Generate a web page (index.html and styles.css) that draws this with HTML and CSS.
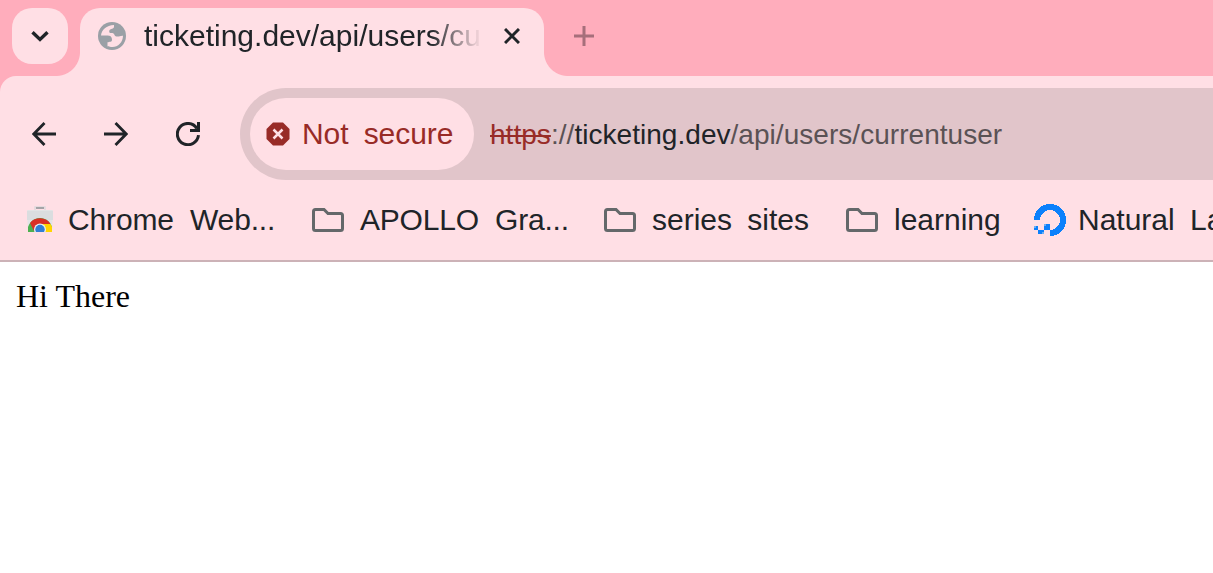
FILE: index.html
```html
<!DOCTYPE html>
<html lang="en">
<head>
<meta charset="utf-8">
<title>ticketing.dev/api/users/currentuser</title>
<link rel="stylesheet" href="styles.css">
</head>
<body>
<header class="tabstrip">
  <button class="tab-search" aria-label="Search tabs">
    <svg width="56" height="56" viewBox="0 0 56 56"><path d="M20.500 24.200l7.500 7.300 7.500-7.300" fill="none" stroke="#202428" stroke-width="3.400"/></svg>
  </button>
  <div class="tab">
    <svg class="globe" width="28" height="28" viewBox="0 0 28 28"><circle cx="14" cy="14" r="14" fill="#9aa0a6"/><path d="M3 13.500C3.500 8 8.500 3.300 16 3v1.800c0 1.200-.8 1.700-2 2-2 .5-2.800 1.200-2.800 2.700 0 1.200.8 1.500 2 1.500 2 0 2.800.6 3.300 2 .5 1.200 1.500 1.500 3 1.500 2 0 3-1 5.500-.8 0 6.500-5 11.300-10.500 11.300-2 0-3.500-.2-5-.8v-4c2 0 4.500 0 4.500-2.400 0-2.800-1.500-4.300-4.500-4.300z" fill="#ffdfe5"/></svg>
    <span class="tab-title">ticketing.dev/api/users/currentuser</span>
    <svg class="close" width="16" height="16" viewBox="0 0 16 16"><path d="M1 1l14 14M15 1L1 15" stroke="#202428" stroke-width="3"/></svg>
  </div>
  <button class="new-tab" aria-label="New tab">
    <svg width="20" height="20" viewBox="0 0 20 20"><path d="M10 0v20M0 10h20" stroke="#a66f7b" stroke-width="3"/></svg>
  </button>
</header>
<div class="toolbar-frame">
<nav class="toolbar">
  <svg class="nav-icon" width="24" height="24" viewBox="0 0 24 24"><path d="M24 12H2M12.500 1L1.800 12l10.700 11" fill="none" stroke="#202428" stroke-width="2.800"/></svg>
  <svg class="nav-icon" width="24" height="24" viewBox="0 0 24 24"><path d="M0 12h22M11.500 1l10.700 11-10.700 11" fill="none" stroke="#202428" stroke-width="2.800"/></svg>
  <svg class="nav-icon" width="24" height="24" viewBox="0 0 24 24"><path d="M22.500 13.200A10.600 10.600 0 1 1 20.800 6.200" fill="none" stroke="#202428" stroke-width="3"/><path d="M21 0h3v10H14V7h4l3-1z" fill="#202428"/></svg>
  <div class="omnibox">
    <div class="security">
      <svg width="24" height="24" viewBox="0 0 24 24"><path d="M7 .5h10L23.500 7v10L17 23.500H7L.5 17V7z" fill="#982b27"/><path d="M7.500 7.500l9 9M16.500 7.500l-9 9" stroke="#ffdfe5" stroke-width="2.500"/></svg>
      <span>Not secure</span>
    </div>
    <div class="url"><span class="scheme">https</span>://<span class="host">ticketing.dev</span>/api/users/currentuser</div>
  </div>
</nav>
</div>
<div class="bookmarks">
  <div class="bookmark">
    <svg width="32" height="32" viewBox="0 0 32 32">
      <defs><clipPath id="bag"><path d="M4 6h24v22H4z"/></clipPath></defs>
      <path d="M3 7q0-1 1-1h24q1 0 1 1l-1 21H4z" fill="#e2e4e5"/>
      <path d="M3 7h26v9H3z" fill="#dadddf"/>
      <path d="M11 6V3h10v3" fill="none" stroke="#dfd9dc" stroke-width="1.500"/><path d="M12 3h8v2h-8z" fill="#a5a4a7"/>
      <g clip-path="url(#bag)"><circle cx="16" cy="26.500" r="12.500" fill="#4db050"/><path d="M6 19A12.500 12.500 0 0 1 26.500 20H16l-6 7z" fill="#d93025"/><path d="M16 20h10.500A12.500 12.500 0 0 1 28.500 28H16z" fill="#ffd500"/><circle cx="16" cy="25.500" r="6" fill="#e9eef2"/><circle cx="16" cy="25.500" r="4.700" fill="#317fd5"/></g>
    </svg>
    <span class="bookmark-label store">Chrome Web...</span>
  </div>
  <div class="bookmark">
    <svg width="32" height="24" viewBox="0 0 32 24"><path class="folder" d="M3.500 1.500H12l4 4h12.500q2 0 2 2v13q0 2-2 2h-25q-2 0-2-2V3.500q0-2 2-2z"/></svg>
    <span class="bookmark-label apollo">APOLLO Gra...</span>
  </div>
  <div class="bookmark">
    <svg width="32" height="24" viewBox="0 0 32 24"><path class="folder" d="M3.500 1.500H12l4 4h12.500q2 0 2 2v13q0 2-2 2h-25q-2 0-2-2V3.500q0-2 2-2z"/></svg>
    <span class="bookmark-label series">series sites</span>
  </div>
  <div class="bookmark">
    <svg width="32" height="24" viewBox="0 0 32 24"><path class="folder" d="M3.500 1.500H12l4 4h12.500q2 0 2 2v13q0 2-2 2h-25q-2 0-2-2V3.500q0-2 2-2z"/></svg>
    <span class="bookmark-label learning">learning</span>
  </div>
  <div class="bookmark">
    <svg width="32" height="32" viewBox="0 0 32 32" shape-rendering="crispEdges"><path d="M3 16A13 13 0 1 1 16 29" fill="none" stroke="#0b80fb" stroke-width="6"/><path d="M10 20h6v6h-6zM4 26h6v4H4zM0 22h4v4H0z" fill="#0b80fb"/><path d="M10 20h2v2h-2zM0 22h2v2H0zM8 28h2v2H8z" fill="#6aaff5"/></svg>
    <span class="bookmark-label natural">Natural Language</span>
  </div>
</div>
<main class="page">Hi There</main>
</body>
</html>
```
FILE: styles.css
```css
* { box-sizing: border-box; }
body {
  margin: 0;
  height: 573px;
  overflow: hidden;
  background: #fff;
  color: #202428;
  font-family: "Liberation Sans", Arial, sans-serif;
  font-size: 30px;
  white-space: nowrap;
}
svg { display: block; flex: none; }
button { border: 0; padding: 0; background: none; }
.tabstrip {
  display: flex;
  height: 76px;
  padding: 8px 12px 0;
  background: #ffadbc;
}
.tab-search {
  width: 56px;
  height: 56px;
  border-radius: 20px;
  background: #ffdfe5;
}
.tab {
  position: relative;
  display: flex;
  align-items: center;
  width: 464px;
  height: 68px;
  margin-left: 12px;
  padding: 0 24px 12px 18px;
  border-radius: 20px 20px 0 0;
  background: #ffdfe5;
}
.tab::before, .tab::after {
  content: "";
  position: absolute;
  bottom: 0;
  width: 24px;
  height: 24px;
}
.tab::before {
  right: 100%;
  background: radial-gradient(circle at 0 0, transparent 23.500px, #ffdfe5 24.500px);
}
.tab::after {
  left: 100%;
  background: radial-gradient(circle at 100% 0, transparent 23.500px, #ffdfe5 24.500px);
}
.tab-title {
  width: 336px;
  margin: 0 24px 0 18px;
  overflow: hidden;
  line-height: 40px;
  mask-image: linear-gradient(to right, #000 286px, transparent 338px);
}
.new-tab { margin: 18px 0 0 30px; height: 20px; }
.toolbar-frame { background: #ffadbc; }
.toolbar {
  display: flex;
  align-items: center;
  gap: 48px;
  height: 116px;
  padding-left: 32px;
  background: #ffdfe5;
  border-radius: 16px 0 0 0;
}
.omnibox {
  display: flex;
  align-items: center;
  flex: 1;
  height: 92px;
  margin-left: -8px;
  padding-left: 10px;
  border-radius: 46px 0 0 46px;
  background: #e1c5ca;
}
.security {
  display: flex;
  align-items: center;
  gap: 12px;
  width: 224px;
  height: 72px;
  padding-left: 16px;
  border-radius: 36px;
  background: #ffdfe5;
  color: #982b27;
  word-spacing: 7px;
  letter-spacing: -0.08px;
}
.url {
  margin-left: 16px;
  padding-top: 2px;
  font-size: 28px;
  letter-spacing: 0.04px;
  color: #5a5255;
}
.scheme { color: #982b27; text-decoration: line-through 2px; }
.host { color: #202428; }
.bookmarks {
  display: flex;
  height: 70px;
  padding-left: 24px;
  overflow: hidden;
  background: #ffdfe5;
  border-bottom: 2px solid #ccb2b7;
}
.bookmark { display: flex; align-items: center; height: 56px; flex: none; }
.bookmark-label { margin-left: 12px; word-spacing: 7px; }
.store { width: 244px; word-spacing: 8px; letter-spacing: -0.15px; }
.apollo { width: 244px; margin-left: 16px; word-spacing: 8px; letter-spacing: -0.2px; }
.series { width: 194px; margin-left: 16px; }
.learning { width: 140px; margin-left: 16px; }
.folder { fill: none; stroke: #64686a; stroke-width: 3; }
.page {
  padding: 16px;
  color: #000;
  font-family: "Liberation Serif", "Times New Roman", serif;
  font-size: 32px;
  line-height: 37px;
}
```
